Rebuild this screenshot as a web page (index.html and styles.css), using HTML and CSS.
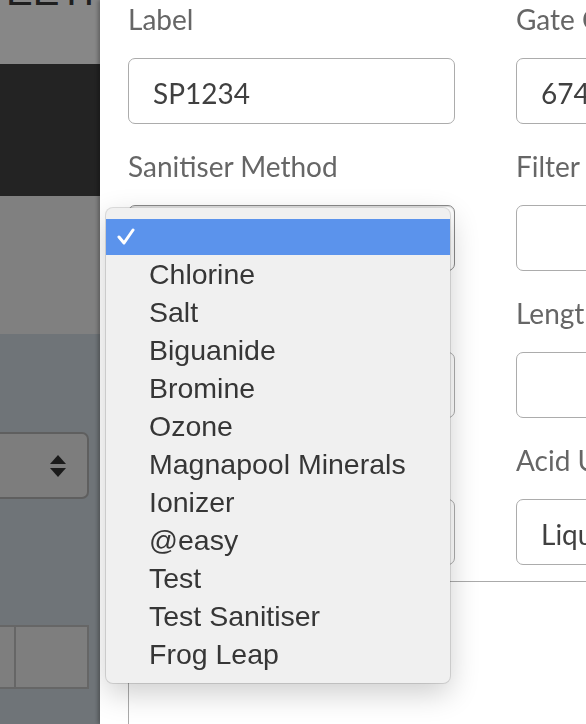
FILE: index.html
```html
<!DOCTYPE html>
<html lang="en">
<head>
	<meta charset="UTF-8" />
	<meta name="viewport" content="width=device-width, initial-scale=1.0" />
	<title>Pool Sheet - Edit Pool</title>
	<link rel="stylesheet" href="styles.css">
</head>
<body>
	<div class="page">
		<header class="page-header">
			<h1>EETH</h1>
		</header>
		<div class="toolbar"></div>
		<div class="subbar"></div>
		<main class="page-main">
			<div class="page-select">
				<svg class="updown" width="16" height="22" viewBox="0 0 16 22">
					<path d="M8 0 L16 9 L0 9 Z" />
					<path d="M0 13 L16 13 L8 22 Z" />
				</svg>
			</div>
			<div class="cell-row">
				<div class="cell"></div>
				<div class="cell"></div>
			</div>
		</main>
	</div>

	<!-- modal backdrop and the edit panel -->
	<div class="backdrop"></div>
	<div class="modal">
		<form class="pool-form">
			<div class="field">
				<label>Label</label>
				<input type="text" value="SP1234" />
			</div>
			<div class="field">
				<label>Gate Code</label>
				<input type="text" value="6742" />
			</div>

			<div class="field">
				<label>Sanitiser Method</label>
				<div class="select-box">
					<ul class="dropdown">
						<li class="selected">
							<svg class="tick" width="18" height="18" viewBox="0 0 18 18">
								<polyline points="2,9 7,15 16,2" />
							</svg>
						</li>
						<li>Chlorine</li>
						<li>Salt</li>
						<li>Biguanide</li>
						<li>Bromine</li>
						<li>Ozone</li>
						<li>Magnapool Minerals</li>
						<li>Ionizer</li>
						<li>@easy</li>
						<li>Test</li>
						<li>Test Sanitiser</li>
						<li>Frog Leap</li>
					</ul>
				</div>
			</div>
			<div class="field">
				<label>Filter Type</label>
				<input type="text" value="" />
			</div>

			<div class="field">
				<label>Volume (L)</label>
				<input type="text" value="" />
			</div>
			<div class="field">
				<label>Length (m)</label>
				<input type="text" value="" />
			</div>

			<div class="field">
				<label>Pool Surface</label>
				<input type="text" value="" />
			</div>
			<div class="field">
				<label>Acid Used</label>
				<input type="text" value="Liquid" />
			</div>
		</form>
		<div class="notes-box"></div>
	</div>
</body>
</html>
```

FILE: styles.css
```css
html, body {
	margin: 0;
	padding: 0;
	height: 100%;
	overflow: hidden;
}
body {
	font-family: Lato, "Open Sans", sans-serif;
	background-color: #d1dbe2;
}

/* page behind the modal */
.page-header {
	height: 64px;
	background-color: #fff;
	overflow: hidden;
}
.page-header h1 {
	margin: -29px 0 0 6px;
	font-family: "Liberation Sans", Arial, sans-serif;
	font-size: 40px;
	font-weight: normal;
	line-height: 40px;
	color: #3b3b3b;
}
.toolbar {
	height: 132px;
	background-color: #424242;
}
.subbar {
	height: 138px;
	background-color: #f2f2f2;
}
.page-main {
	padding-top: 98px;
	background-color: #d1dbe2;
}
.page-select {
	display: flex;
	align-items: center;
	justify-content: flex-end;
	box-sizing: border-box;
	width: 289px;
	height: 67px;
	margin-left: -200px;
	padding-right: 21px;
	border: 2px solid #b4b4b4;
	border-radius: 7px;
	background-color: #ececec;
}
.updown path {
	fill: #333;
}
.cell-row {
	display: flex;
	margin: 126px 0 0 -60px;
}
.cell {
	box-sizing: border-box;
	width: 76px;
	height: 64px;
	border: 2px solid #c0c0c0;
	background-color: #eee;
}
.cell + .cell {
	width: 73px;
	border-left: none;
}

.backdrop {
	position: fixed;
	top: 0;
	left: 0;
	right: 0;
	bottom: 0;
	background-color: rgba(0,0,0,0.47);
}

/* edit panel */
.modal {
	position: fixed;
	top: 0;
	left: 100px;
	right: 0;
	bottom: 0;
	background-color: #fff;
	box-shadow: -2px 0 4px rgba(0,0,0,0.3);
	overflow: hidden;
	padding: 2px 0 0 28px;
}
.pool-form {
	display: grid;
	grid-template-columns: 327px 327px;
	column-gap: 61px;
	row-gap: 25px;
}
.field {
	position: relative;
}
.field label {
	display: block;
	margin-bottom: 22px;
	font-size: 28px;
	line-height: 34px;
	color: #666;
}
.field input,
.select-box {
	display: block;
	box-sizing: border-box;
	width: 100%;
	height: 66px;
	margin: 0;
	padding: 4px 24px 0;
	border: 1px solid #acacac;
	border-radius: 7px;
	font-family: Lato, "Open Sans", sans-serif;
	font-size: 28px;
	color: #404040;
	background-color: #fff;
}
.select-box {
	position: relative;
	border-color: #8a8a8a;
	box-shadow: inset 0 1px 1px rgba(0,0,0,0.15);
}

/* open option list of the sanitiser select */
.dropdown {
	position: absolute;
	top: 2px;
	left: -23px;
	z-index: 10;
	width: 344px;
	margin: 0;
	padding: 11px 0 10px;
	list-style: none;
	background-color: #f0f0f0;
	border-radius: 7px;
	box-shadow: 0 0 0 1px rgba(0,0,0,0.12), 0 10px 30px rgba(0,0,0,0.2);
	font-family: "Liberation Sans", Arial, sans-serif;
	font-size: 28.5px;
	color: #363636;
}
.dropdown li {
	height: 38px;
	line-height: 38px;
	padding-left: 43px;
}
.dropdown li.selected {
	position: relative;
	height: 36px;
	background-color: #5b93ec;
}
.tick {
	position: absolute;
	left: 11px;
	top: 9px;
}
.tick polyline {
	fill: none;
	stroke: #fff;
	stroke-width: 3;
	stroke-linecap: round;
	stroke-linejoin: round;
}

.notes-box {
	height: 300px;
	margin-top: 16px;
	border-top: 1px solid #aaa;
	border-left: 1px solid #aaa;
}
```
